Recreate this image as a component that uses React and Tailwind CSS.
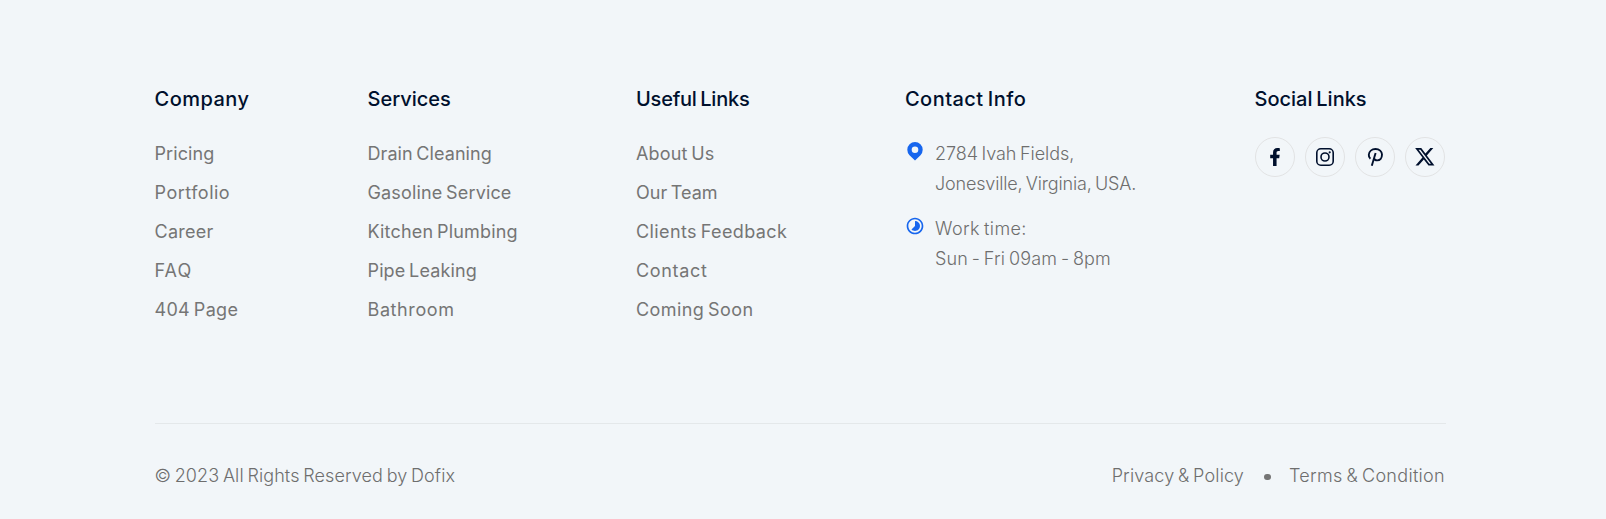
import { FaFacebookF } from "react-icons/fa";
import { FaXTwitter } from "react-icons/fa6";
import { MdTimelapse } from "react-icons/md";

const columns = [
  {
    title: "Company",
    tracking: "tracking-[0.46px]",
    width: "w-[213px]",
    links: [
      ["Pricing", "tracking-[0.1px]"],
      ["Portfolio", "tracking-[0.5px]"],
      ["Career", "tracking-[0.25px]"],
      ["FAQ", "tracking-[1.1px]"],
      ["404 Page", "tracking-[0.3px]"],
    ],
  },
  {
    title: "Services",
    tracking: "tracking-[0px]",
    width: "w-[268.5px]",
    links: [
      ["Drain Cleaning", "tracking-[0.07px]"],
      ["Gasoline Service", "tracking-[0.15px]"],
      ["Kitchen Plumbing", "tracking-[0.18px]"],
      ["Pipe Leaking", "tracking-[0.13px]"],
      ["Bathroom", "tracking-[0.6px]"],
    ],
  },
  {
    title: "Useful Links",
    tracking: "tracking-[-0.22px]",
    width: "w-[269px]",
    links: [
      ["About Us", "tracking-[0.15px]"],
      ["Our Team", "tracking-[0px]"],
      ["Clients Feedback", "tracking-[0.381px]"],
      ["Contact", "tracking-[0.676px]"],
      ["Coming Soon", "tracking-[0.4px]"],
    ],
  },
];

function Heading({ children, tracking }) {
  return (
    <h3 className={`text-[20px] leading-[26px] font-medium text-[#00102d] ${tracking}`}>
      {children}
    </h3>
  );
}

function InstagramIcon() {
  return (
    <svg viewBox="0 0 18 18" className="size-[18px]" fill="none" stroke="currentColor" strokeWidth="1.6">
      <rect x="0.8" y="0.8" width="16.4" height="16.4" rx="4" />
      <circle cx="9" cy="9" r="4" />
      <circle cx="13.7" cy="4.3" r="1.1" fill="currentColor" stroke="none" />
    </svg>
  );
}

function PinterestIcon() {
  return (
    <svg viewBox="0 0 16 18" className="h-[18px] w-4" fill="none" stroke="currentColor" strokeWidth="1.9">
      <path d="M3.4 10.7C2.100 9.700 1.700 8.200 1.800 6.800C2 3.400 4.800 1 8.500 1C12.300 1 15 3.500 15 6.600C15 10 13 12.400 10.200 12.400C8.600 12.400 7.400 11.600 7 10.400" />
      <path d="M8.600 5L4.800 17.700" />
    </svg>
  );
}

function PinIcon() {
  return (
    <svg viewBox="0 0 16 19" className="mt-[3px] ml-0.5 h-[19px] w-4 shrink-0" fill="currentColor">
      <path
        fillRule="evenodd"
        d="M8 18.6L2.5 13.200A7.700 7.700 0 1 1 13.500 13.200ZM8 4.500a3.300 3.300 0 1 0 0 6.600 3.300 3.300 0 0 0 0-6.600Z"
      />
    </svg>
  );
}

function Social({ children }) {
  return (
    <a className="flex size-10 items-center justify-center rounded-full border border-[#e2e3e4] text-[#00102d]">
      {children}
    </a>
  );
}

export default function App() {
  return (
    <footer className="h-[519px] bg-[#f2f6f9] pr-[160px] pl-[154.5px] pt-[86px] font-['Inter',sans-serif] text-[18px] text-[#757575] whitespace-nowrap [word-spacing:-1.5px]">
      <div className="flex h-[338px] w-[1291px] border-b border-[#e4e8ea]">
        {columns.map((column) => (
          <div key={column.title} className={column.width}>
            <Heading tracking={column.tracking}>{column.title}</Heading>
            <ul className="mt-[27px] flex flex-col gap-[9px]">
              {column.links.map(([label, tracking]) => (
                <li key={label} className={`leading-[30px] ${tracking}`}>
                  {label}
                </li>
              ))}
            </ul>
          </div>
        ))}
        <div className="w-[349.5px]">
          <Heading tracking="tracking-[0.449px]">Contact Info</Heading>
          <div className="mt-[27px] flex flex-col gap-[15px] leading-[30px] font-light text-[#6e6e6e]">
            <div className="flex">
              <span className="w-[30px] text-[#1766ee]">
                <PinIcon />
              </span>
              <p>
                <span className="tracking-[-0.05px]">2784 Ivah Fields,</span>
                <br />
                <span className="tracking-[-0.17px]">Jonesville, Virginia, USA.</span>
              </p>
            </div>
            <div className="flex">
              <span className="w-[30px] text-[#1766ee]">
                <MdTimelapse className="mt-[2px] size-5" />
              </span>
              <p>
                <span className="tracking-[0.42px]">Work time:</span>
                <br />
                <span className="tracking-[0.17px]">Sun - Fri 09am - 8pm</span>
              </p>
            </div>
          </div>
        </div>
        <div>
          <Heading tracking="tracking-[0px]">Social Links</Heading>
          <div className="mt-[25px] flex gap-2.5">
            <Social>
              <FaFacebookF className="size-[18px]" />
            </Social>
            <Social>
              <InstagramIcon />
            </Social>
            <Social>
              <PinterestIcon />
            </Social>
            <Social>
              <FaXTwitter className="size-[21.5px]" />
            </Social>
          </div>
        </div>
      </div>
      <div className="mt-[37px] flex w-[1290.5px] items-center justify-between leading-[30px] font-light text-[#6e6e6e]">
        <p className="tracking-[0.1px]">© 2023 All Rights Reserved by Dofix</p>
        <div className="flex items-center">
          <span className="tracking-[0.15px]">Privacy &amp; Policy</span>
          <span className="mr-[18.5px] ml-5 mt-0.5 size-[6.5px] rounded-full bg-[#757575]" />
          <span className="tracking-[0.31px]">Terms &amp; Condition</span>
        </div>
      </div>
    </footer>
  );
}
